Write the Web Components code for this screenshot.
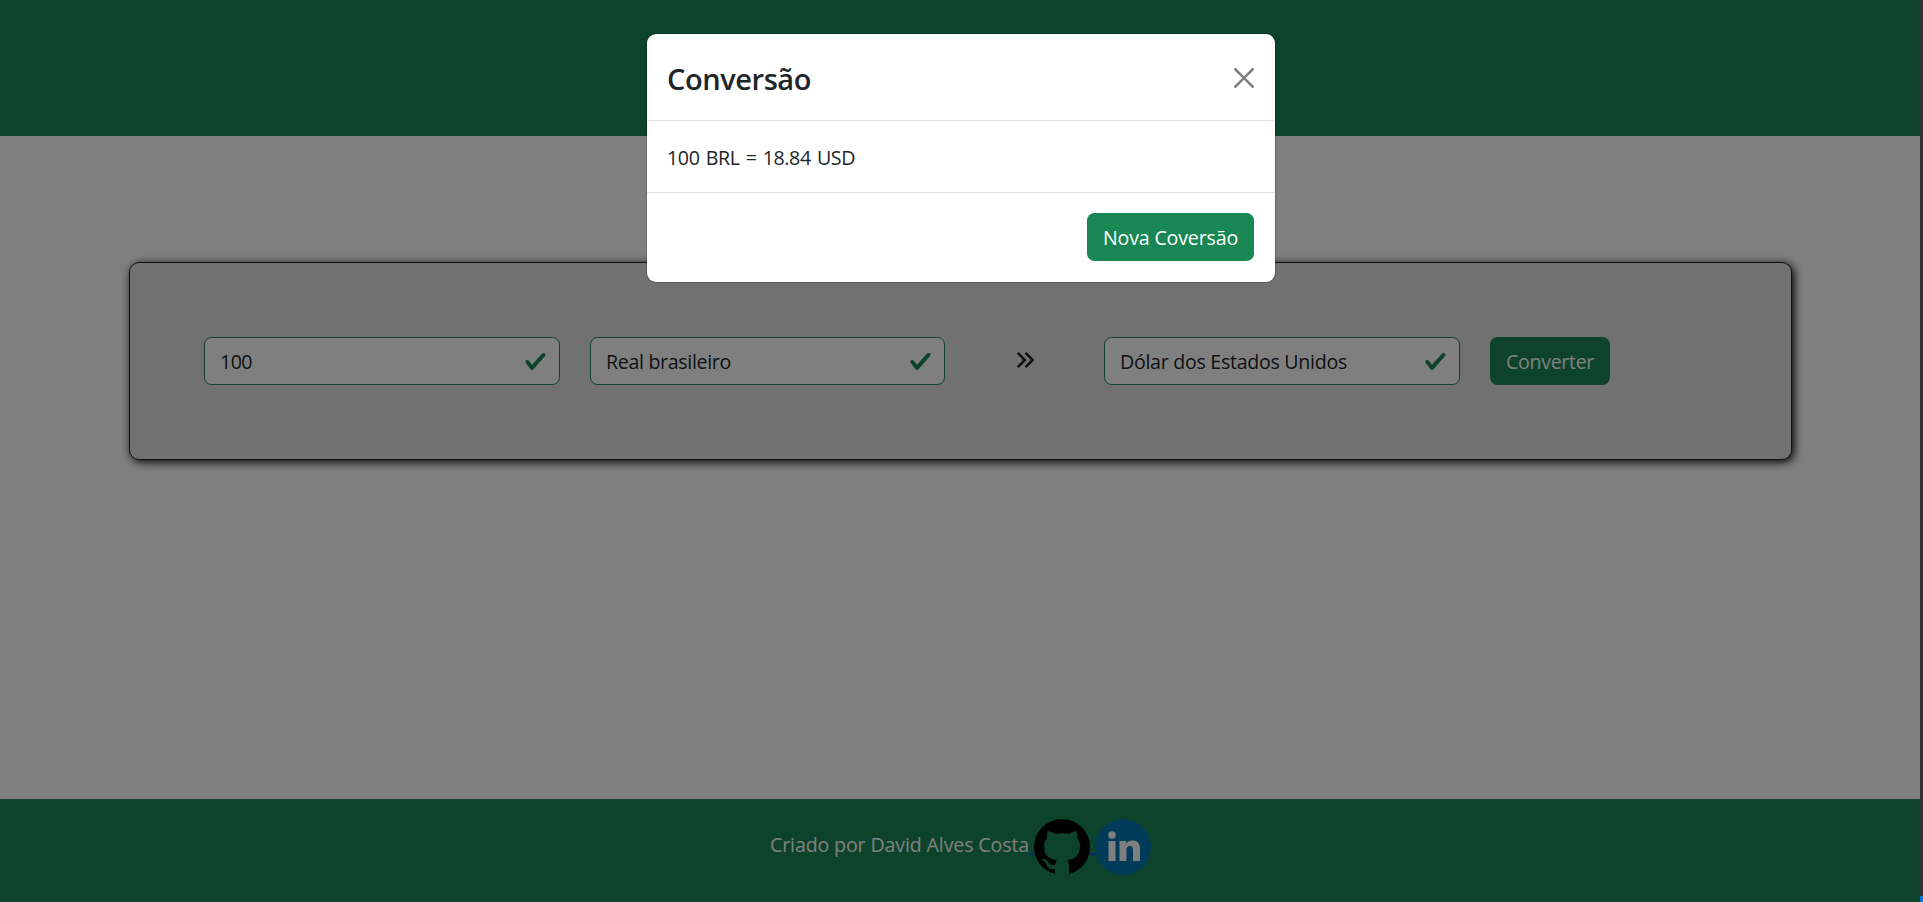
<!DOCTYPE html>
<html lang="pt-BR">
<head>
<meta charset="utf-8">
<title>Conversor de moedas</title>
<style>
html,body{margin:0;height:100%;overflow:hidden}
body{font-family:"Open Sans","Noto Sans",sans-serif;font-size:19.6px;color:#212529}
</style>
</head>
<body>
<converter-app></converter-app>
<script>
function define(name, html, setup){
  const t=document.createElement('template'); t.innerHTML=html;
  customElements.define(name, class extends HTMLElement{
    connectedCallback(){
      if(this.shadowRoot) return;
      this.attachShadow({mode:'open'}).append(t.content.cloneNode(true));
      if(setup) setup(this,this.shadowRoot);
    }
  });
}

/* One line of text whose tracking is adjusted to the given width. */
define('fit-text', `<style>:host{display:inline-block;white-space:nowrap;line-height:30px}span{display:inline-block}</style><span><slot></slot></span>`, (el,root)=>{
  const want=parseFloat(el.getAttribute('width')), span=root.querySelector('span');
  const n=el.textContent.length;
  const has=span.getBoundingClientRect().width;
  span.style.letterSpacing=((want-has)/n)+'px';
  el.style.width=want+'px';
});

define('app-header', `<style>:host{display:block;height:136px;flex:none;background:#198754}</style>`);

define('valid-field', `<style>
:host{display:flex;box-sizing:border-box;width:356px;height:48px;flex:none;align-items:center;justify-content:space-between;
border:1px solid #198754;border-radius:7.5px;background:#fff;padding:2px 12px 0 15px}
svg{width:23px;height:23px;margin-top:-1px;flex:none}
</style><slot></slot><svg viewBox="0 0 8 8"><path fill="#198754" d="M2.3 6.73.6 4.53c-.4-1.04.46-1.4 1.1-.8l1.1 1.4 3.4-3.8c.6-.63 1.6-.27 1.2.7l-4 4.6c-.43.5-.8.4-1.1.1z"/></svg>`);

define('green-button', `<style>
:host{display:flex;box-sizing:border-box;height:48px;flex:none;align-items:center;justify-content:center;padding-top:2px;
border-radius:7.5px;background:#198754;color:#fff}
</style><slot></slot>`);

define('converter-panel', `<style>
:host{display:flex;box-sizing:border-box;width:1663px;height:198px;margin:126px 0 0 129px;padding:74px;align-items:flex-start;
border:1px solid #212529;border-radius:10px;background:#e2e2e2;box-shadow:2px 2px 10px #000}
.second{margin-left:30px;width:355px}
.arrow{width:17px;height:16px;margin:15px 70px 0 72px;flex:none}
green-button{width:120px;margin-left:30px}
</style>
<valid-field><fit-text width="32">100</fit-text></valid-field>
<valid-field class="second"><fit-text width="125">Real brasileiro</fit-text></valid-field>
<svg class="arrow" viewBox="0 0 17 16" fill="none" stroke="#212529" stroke-width="2.5" stroke-linecap="round" stroke-linejoin="round"><path d="M1.500 1.700 7.800 8 1.500 14.300M9.300 1.700 15.600 8 9.300 14.300"/></svg>
<valid-field><fit-text width="227">Dólar dos Estados Unidos</fit-text></valid-field>
<green-button><fit-text width="88">Converter</fit-text></green-button>`);

define('app-footer', `<style>
:host{display:flex;box-sizing:border-box;height:103px;flex:none;padding:20px 0 0 770px;background:#198754;color:#fff}
fit-text{margin-top:11px}
i{width:5px;height:2px;margin-top:34px;background:#1749dc}
svg{width:56px;height:56px;flex:none}
</style>
<fit-text width="259">Criado por David Alves Costa</fit-text><i></i>
<svg viewBox="0 0 56 56"><circle cx="28" cy="28" r="28"/><path fill="#198754" d="M13.700 12.200C16.500 12 19 13.400 21.500 15 26 13.900 30.500 13.900 35 15 37.500 13.400 40 12 42.600 12.200 43.600 14.600 43.600 17 43.100 19.300 45.400 21.700 46.200 24.600 46 28 45.600 37 40.500 40.300 33 41.300 34.600 43 35 44.500 35 47V57H21V50.200C16.500 50.800 14 49.300 12.600 46 11.500 43.500 10 41.800 7.800 40.800 8 39.300 11.800 39.300 14.400 43.200 16 46 18 46.700 21.200 45.700 21.400 43.700 21.900 42.300 23 41.300 15.500 40.300 10.400 37 10 28 9.800 24.600 10.700 21.700 13.100 19.300 12.500 17 12.700 14.600 13.700 12.200z"/></svg><i></i>
<svg viewBox="0 0 56 56"><circle cx="28" cy="28" r="28" fill="#0077b5"/><g fill="#fff"><circle cx="17" cy="16" r="3.8"/><path d="M13.500 22h7v20h-7zM24.500 22h6.700v2.800c1.300-2.200 3.600-3.300 6.200-3.300 6 0 7.600 3.700 7.600 9.500V42h-7V32c0-2.700-.4-4.900-3.200-4.900s-3.300 2.200-3.300 4.800V42h-7z"/></g></svg>`);

define('result-modal', `<style>
:host{position:absolute;left:646px;top:33px;box-sizing:border-box;width:630px;height:250px;display:flex;flex-direction:column;
border:1px solid rgba(0,0,0,.18);border-radius:10px;background:#fff;background-clip:padding-box}
header,section{box-sizing:border-box;flex:none;border-bottom:1px solid #dee2e6;padding:0 20px}
header{display:flex;height:87px;justify-content:space-between;padding-top:30px}
header fit-text{font-size:29px;font-weight:600}
header svg{width:20px;height:20px;margin:4px 1px 0 0}
section{height:72px;padding-top:22px;word-spacing:1.500px}
footer{display:flex;justify-content:flex-end;padding:20px 21px 0 0}
green-button{width:167px;font-weight:500}
</style>
<header><fit-text width="144">Conversão</fit-text><svg viewBox="0 0 16 16" fill="#808080"><path d="M.293.293a1 1 0 0 1 1.414 0L8 6.586 14.293.293a1 1 0 1 1 1.414 1.414L9.414 8l6.293 6.293a1 1 0 0 1-1.414 1.414L8 9.414l-6.293 6.293a1 1 0 0 1-1.414-1.414L6.586 8 .293 1.707a1 1 0 0 1 0-1.414z"/></svg></header>
<section><fit-text width="188">100 BRL = 18.84 USD</fit-text></section>
<footer><green-button><fit-text width="135">Nova Coversão</fit-text></green-button></footer>`);

define('converter-app', `<style>
:host{display:flex;position:relative;width:1923px;height:902px;background:#fff}
.page{display:flex;flex-direction:column;width:1920px}
main{display:flow-root;flex:1}
.edge{display:flex;flex-direction:column;width:3px;background:#303030}
.edge b{margin-top:auto;height:6px;background:#0078d4}
.backdrop{position:absolute;left:0;top:0;width:1920px;height:902px;background:rgba(0,0,0,.5)}
</style>
<div class="page"><app-header></app-header><main><converter-panel></converter-panel></main><app-footer></app-footer></div>
<div class="edge"><b></b></div>
<div class="backdrop"></div>
<result-modal></result-modal>`);
</script>
</body>
</html>
